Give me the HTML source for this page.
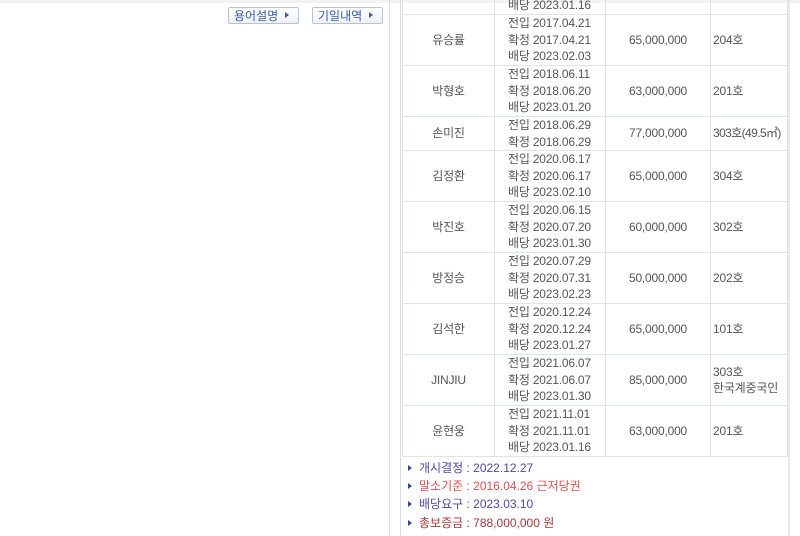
<!DOCTYPE html>
<html><head><meta charset="utf-8"><style>
body{margin:0;width:800px;height:536px;background:#fff;position:relative;overflow:hidden;font-family:"Liberation Sans","Noto Sans CJK KR",sans-serif;font-size:12px;color:#555}
.top{position:absolute;left:0;top:0;width:800px;height:3px;background:#f2f2f2}
.vl{position:absolute;top:0;height:536px;width:1px;background:#d8dde5}
.btn{position:absolute;top:7px;width:71px;height:17px;border:1px solid #b9c3d0;border-radius:2px;background:linear-gradient(#fff,#eef1f5);color:#3a5ba8;font-size:12px;line-height:16px;box-sizing:border-box;padding-left:5px}
.btn:after{content:"";position:absolute;right:9px;top:4px;border-left:4px solid #3a5ba8;border-top:3.5px solid transparent;border-bottom:3.5px solid transparent}
table{position:absolute;left:402px;top:-37px;border-collapse:collapse;width:386px;letter-spacing:-0.2px}
td{border:1px solid #dfe4ea;padding:0;line-height:16.5px;height:50px;white-space:nowrap;overflow:hidden}
td.n{width:91px;text-align:center}
td.d{width:111px;padding-left:13px;box-sizing:border-box}
td.m{width:104px;text-align:center}
td.r{padding-left:2px}
tr.s td{height:32px}
.info{position:absolute;left:408px;font-size:12px}
.info:before{content:"";display:inline-block;border-left:4px solid #2a4aa0;border-top:3px solid transparent;border-bottom:3px solid transparent;margin-right:7px;vertical-align:1px}
</style></head><body>
<div class="top"></div>
<div class="vl" style="left:389px"></div>
<div class="vl" style="left:400px"></div>
<div class="vl" style="left:788px;width:2px;background:#e6eaf0"></div>
<div class="btn" style="left:228px">용어설명</div>
<div class="btn" style="left:312px">기일내역</div>
<table>
<tr><td class="n"></td><td class="d">전입<br>확정<br>배당 2023.01.16</td><td class="m"></td><td class="r"></td></tr>
<tr><td class="n">유승률</td><td class="d">전입 2017.04.21<br>확정 2017.04.21<br>배당 2023.02.03</td><td class="m">65,000,000</td><td class="r">204호</td></tr>
<tr><td class="n">박형호</td><td class="d">전입 2018.06.11<br>확정 2018.06.20<br>배당 2023.01.20</td><td class="m">63,000,000</td><td class="r">201호</td></tr>
<tr class="s"><td class="n">손미진</td><td class="d">전입 2018.06.29<br>확정 2018.06.29</td><td class="m">77,000,000</td><td class="r" style="letter-spacing:-0.6px">303호(49.5㎡)</td></tr>
<tr><td class="n">김정환</td><td class="d">전입 2020.06.17<br>확정 2020.06.17<br>배당 2023.02.10</td><td class="m">65,000,000</td><td class="r">304호</td></tr>
<tr><td class="n">박진호</td><td class="d">전입 2020.06.15<br>확정 2020.07.20<br>배당 2023.01.30</td><td class="m">60,000,000</td><td class="r">302호</td></tr>
<tr><td class="n">방정승</td><td class="d">전입 2020.07.29<br>확정 2020.07.31<br>배당 2023.02.23</td><td class="m">50,000,000</td><td class="r">202호</td></tr>
<tr><td class="n">김석한</td><td class="d">전입 2020.12.24<br>확정 2020.12.24<br>배당 2023.01.27</td><td class="m">65,000,000</td><td class="r">101호</td></tr>
<tr><td class="n">JINJIU</td><td class="d">전입 2021.06.07<br>확정 2021.06.07<br>배당 2023.01.30</td><td class="m">85,000,000</td><td class="r">303호<br>한국계중국인</td></tr>
<tr><td class="n">윤현웅</td><td class="d">전입 2021.11.01<br>확정 2021.11.01<br>배당 2023.01.16</td><td class="m">63,000,000</td><td class="r">201호</td></tr>
</table>
<div class="info" style="top:459px;color:#4a4aa8">개시결정 : 2022.12.27</div>
<div class="info" style="top:477px;color:#e05050">말소기준 : 2016.04.26 근저당권</div>
<div class="info" style="top:495px;color:#4a4aa8">배당요구 : 2023.03.10</div>
<div class="info" style="top:514px;color:#a83838">총보증금 : 788,000,000 원</div>
</body></html>
